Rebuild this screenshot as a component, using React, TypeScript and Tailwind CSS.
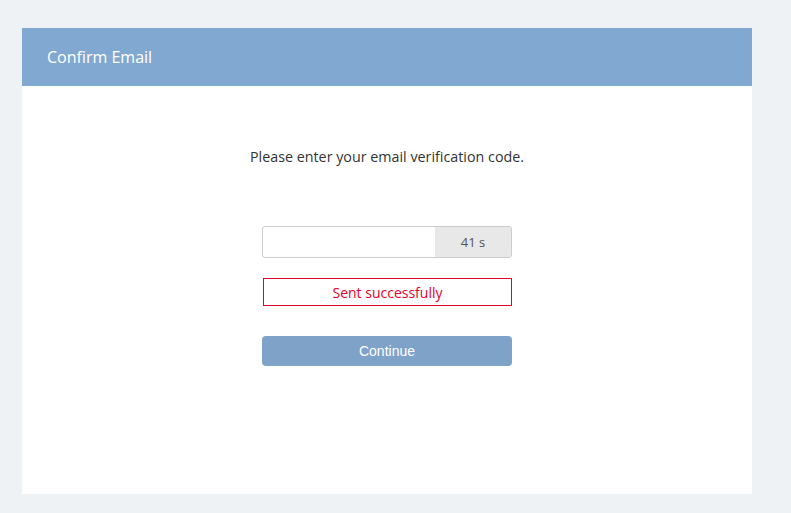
import React, { useState } from 'react';

export default function App() {
  const [code, setCode] = useState('');

  return (
    <div className="min-h-screen w-full bg-[#eef2f5] pt-[28px] pl-[22px] font-['Open_Sans','Noto_Sans',sans-serif]">
      <div className="w-[730px] h-[466px] bg-white flex flex-col">
        <div className="h-[58px] bg-[#81a8d0] flex items-center pl-[25px]">
          <h1 className="text-white text-[16px]">Confirm Email</h1>
        </div>
        <div className="flex flex-col items-center">
          <p className="mt-[60px] text-[14.3px] text-[#333]">Please enter your email verification code.</p>
          <div className="mt-[59px] w-[250px] h-[32px] flex border border-[#ccc] rounded-[3px] overflow-hidden">
            <input
              value={code}
              onChange={e => setCode(e.target.value)}
              className="flex-1 min-w-0 px-2 text-[14px] outline-none"
            />
            <span className="w-[76px] bg-[#e8e8e8] flex items-center justify-center text-[13px] text-[#555]">41 s</span>
          </div>
          <div className="mt-[20px] w-[249px] h-[28px] ml-px border border-[#e4002b] flex items-center justify-center text-[14px] text-[#e4002b]">
            Sent successfully
          </div>
          <button className="mt-[30px] w-[250px] h-[30px] bg-[#7fa2c9] rounded-[4px] text-white text-[14px] font-['Liberation_Sans',Arial,sans-serif]">
            Continue
          </button>
        </div>
      </div>
    </div>
  );
}
